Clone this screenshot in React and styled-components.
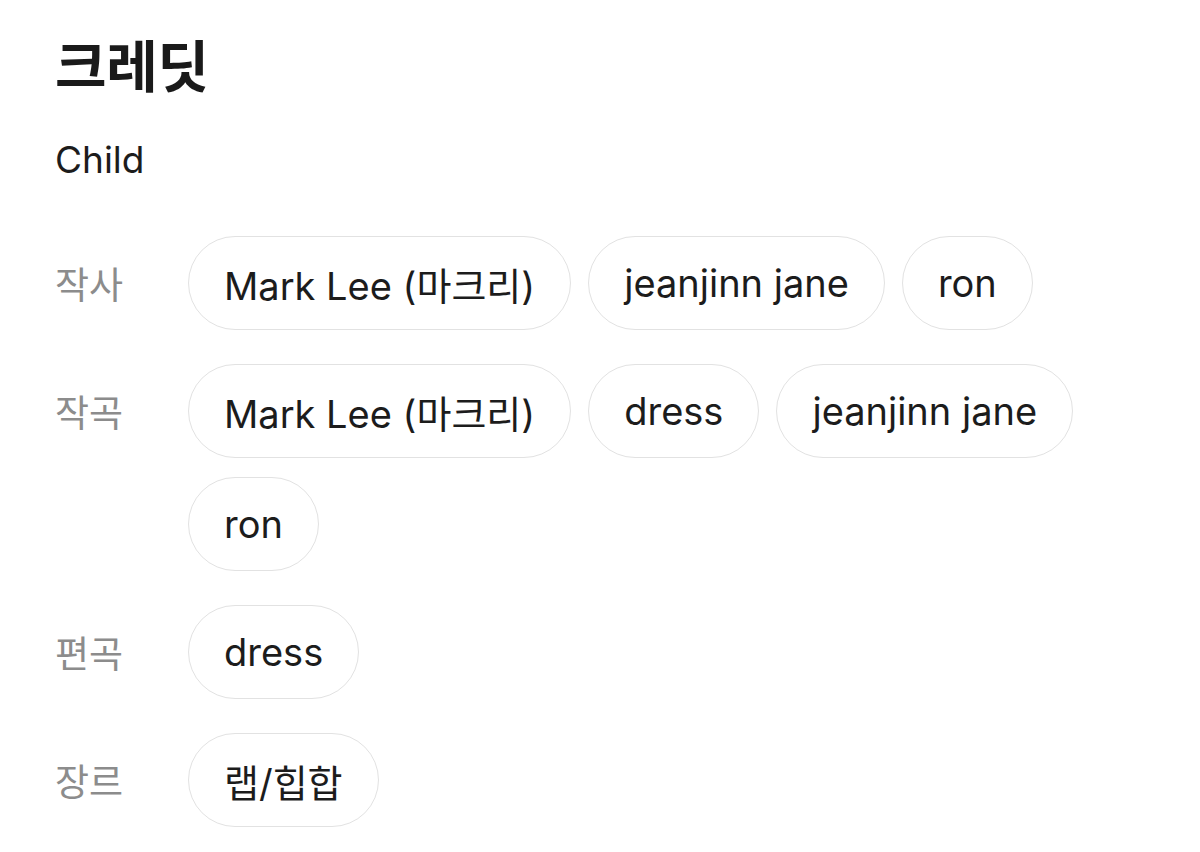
import React from "react";
import styled, { createGlobalStyle } from "styled-components";

const Global = createGlobalStyle`
  html, body { margin: 0; padding: 0; background: #ffffff; }
  body { font-family: "Inter", "Noto Sans CJK KR", sans-serif; color: #1c1c1c; }
`;

const Page = styled.div`
  padding: 29px 0 0 55px;
  display: flex;
  flex-direction: column;
`;

const Title = styled.h1`
  margin: 0;
  font-size: 56px;
  font-weight: 700;
  line-height: 76px;
  letter-spacing: -0.3px;
  color: #1a1a1a;
`;

const Song = styled.div`
  margin-top: 33px;
  font-size: 37px;
  line-height: 44px;
  color: #1c1c1c;
`;

const Groups = styled.div`
  margin-top: 54px;
  display: flex;
  flex-direction: column;
  gap: 34px;
`;

const Group = styled.div`
  display: flex;
  align-items: flex-start;
`;

const Label = styled.div`
  width: 133px;
  flex: none;
  height: 94px;
  display: flex;
  align-items: center;
  font-size: 37px;
  color: #8c8c8c;
`;

const Chips = styled.div`
  display: flex;
  flex-wrap: wrap;
  column-gap: 17px;
  row-gap: 19px;
  max-width: 900px;
`;

const Chip = styled.div`
  box-sizing: border-box;
  height: 94px;
  padding: 0 35px;
  display: inline-flex;
  align-items: center;
  border: 1.5px solid #e2e2e2;
  border-radius: 47px;
  font-size: 38px;
  color: #1c1c1c;
  white-space: nowrap;
`;

const credits = [
  { label: "작사", names: ["Mark Lee (마크리)", "jeanjinn jane", "ron"] },
  { label: "작곡", names: ["Mark Lee (마크리)", "dress", "jeanjinn jane", "ron"] },
  { label: "편곡", names: ["dress"] },
  { label: "장르", names: ["랩/힙합"] },
];

export default function App() {
  return (
    <>
      <Global />
      <Page>
        <Title>크레딧</Title>
        <Song>Child</Song>
        <Groups>
          {credits.map((c) => (
            <Group key={c.label}>
              <Label>{c.label}</Label>
              <Chips>
                {c.names.map((n, i) => (
                  <Chip key={i}>{n}</Chip>
                ))}
              </Chips>
            </Group>
          ))}
        </Groups>
      </Page>
    </>
  );
}
